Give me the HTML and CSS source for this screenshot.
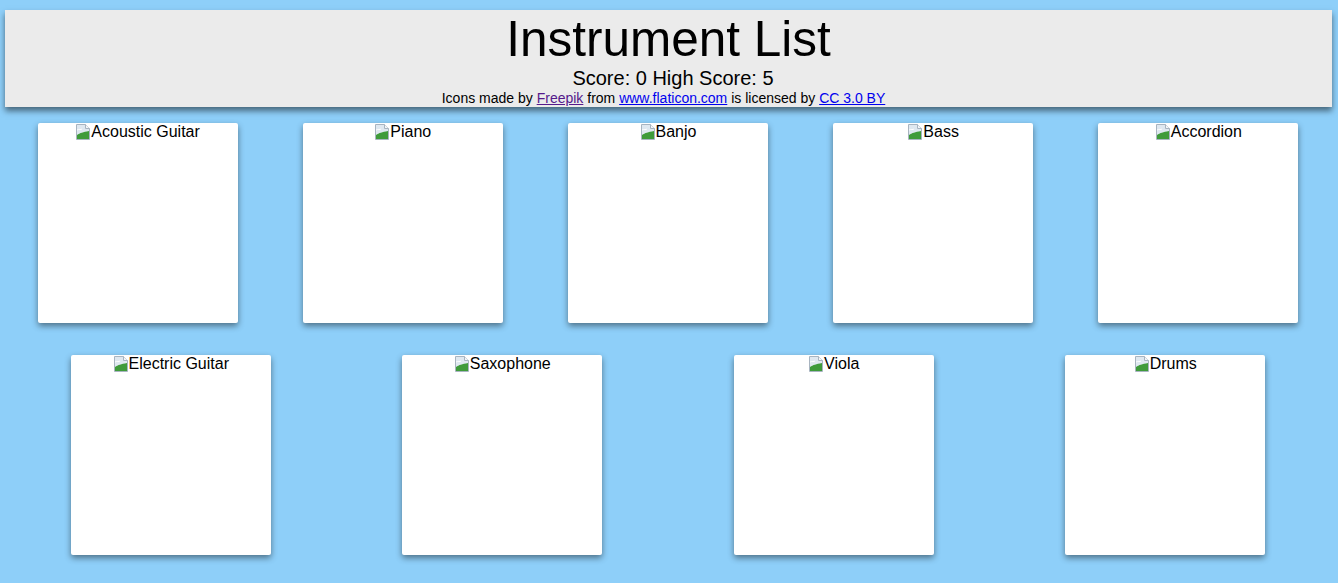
FILE: index.html
```html
<!DOCTYPE html>
<html>
<head>
<meta charset="utf-8">
<title>Instrument List</title>
<link rel="stylesheet" href="styles.css">
</head>
<body>
<header class="header">
  <h1 class="title">Instrument List</h1>
  <div class="score">Score: 0 High Score: 5</div>
  <div class="credits">Icons made by <a class="visited" href="#">Freepik</a> from <a href="#">www.flaticon.com</a> is licensed by <a href="#">CC 3.0 BY</a></div>
</header>
<main class="board">
  <div class="row">
    <div class="card"><span class="alt"><svg class="broken" viewBox="0 0 16 16"><path d="M1.5 0.5h9l4 4v11h-13z" fill="#dfe8f0" stroke="#a8b4c0"/><path d="M10.5 0.5v4h4" fill="#f4f6f8" stroke="#a8b4c0"/><path d="M2 15V11c3-2 6-3 12-4v8z" fill="#3f9b3a"/><path d="M2 6c2-1 4 0 5-1" stroke="#fff" fill="none"/></svg>Acoustic Guitar</span></div>
    <div class="card"><span class="alt"><svg class="broken" viewBox="0 0 16 16"><path d="M1.5 0.5h9l4 4v11h-13z" fill="#dfe8f0" stroke="#a8b4c0"/><path d="M10.5 0.5v4h4" fill="#f4f6f8" stroke="#a8b4c0"/><path d="M2 15V11c3-2 6-3 12-4v8z" fill="#3f9b3a"/><path d="M2 6c2-1 4 0 5-1" stroke="#fff" fill="none"/></svg>Piano</span></div>
    <div class="card"><span class="alt"><svg class="broken" viewBox="0 0 16 16"><path d="M1.5 0.5h9l4 4v11h-13z" fill="#dfe8f0" stroke="#a8b4c0"/><path d="M10.5 0.5v4h4" fill="#f4f6f8" stroke="#a8b4c0"/><path d="M2 15V11c3-2 6-3 12-4v8z" fill="#3f9b3a"/><path d="M2 6c2-1 4 0 5-1" stroke="#fff" fill="none"/></svg>Banjo</span></div>
    <div class="card"><span class="alt"><svg class="broken" viewBox="0 0 16 16"><path d="M1.5 0.5h9l4 4v11h-13z" fill="#dfe8f0" stroke="#a8b4c0"/><path d="M10.5 0.5v4h4" fill="#f4f6f8" stroke="#a8b4c0"/><path d="M2 15V11c3-2 6-3 12-4v8z" fill="#3f9b3a"/><path d="M2 6c2-1 4 0 5-1" stroke="#fff" fill="none"/></svg>Bass</span></div>
    <div class="card"><span class="alt"><svg class="broken" viewBox="0 0 16 16"><path d="M1.5 0.5h9l4 4v11h-13z" fill="#dfe8f0" stroke="#a8b4c0"/><path d="M10.5 0.5v4h4" fill="#f4f6f8" stroke="#a8b4c0"/><path d="M2 15V11c3-2 6-3 12-4v8z" fill="#3f9b3a"/><path d="M2 6c2-1 4 0 5-1" stroke="#fff" fill="none"/></svg>Accordion</span></div>
  </div>
  <div class="row">
    <div class="card"><span class="alt"><svg class="broken" viewBox="0 0 16 16"><path d="M1.5 0.5h9l4 4v11h-13z" fill="#dfe8f0" stroke="#a8b4c0"/><path d="M10.5 0.5v4h4" fill="#f4f6f8" stroke="#a8b4c0"/><path d="M2 15V11c3-2 6-3 12-4v8z" fill="#3f9b3a"/><path d="M2 6c2-1 4 0 5-1" stroke="#fff" fill="none"/></svg>Electric Guitar</span></div>
    <div class="card"><span class="alt"><svg class="broken" viewBox="0 0 16 16"><path d="M1.5 0.5h9l4 4v11h-13z" fill="#dfe8f0" stroke="#a8b4c0"/><path d="M10.5 0.5v4h4" fill="#f4f6f8" stroke="#a8b4c0"/><path d="M2 15V11c3-2 6-3 12-4v8z" fill="#3f9b3a"/><path d="M2 6c2-1 4 0 5-1" stroke="#fff" fill="none"/></svg>Saxophone</span></div>
    <div class="card"><span class="alt"><svg class="broken" viewBox="0 0 16 16"><path d="M1.5 0.5h9l4 4v11h-13z" fill="#dfe8f0" stroke="#a8b4c0"/><path d="M10.5 0.5v4h4" fill="#f4f6f8" stroke="#a8b4c0"/><path d="M2 15V11c3-2 6-3 12-4v8z" fill="#3f9b3a"/><path d="M2 6c2-1 4 0 5-1" stroke="#fff" fill="none"/></svg>Viola</span></div>
    <div class="card"><span class="alt"><svg class="broken" viewBox="0 0 16 16"><path d="M1.5 0.5h9l4 4v11h-13z" fill="#dfe8f0" stroke="#a8b4c0"/><path d="M10.5 0.5v4h4" fill="#f4f6f8" stroke="#a8b4c0"/><path d="M2 15V11c3-2 6-3 12-4v8z" fill="#3f9b3a"/><path d="M2 6c2-1 4 0 5-1" stroke="#fff" fill="none"/></svg>Drums</span></div>
  </div>
</main>
</body>
</html>
```
FILE: styles.css
```css
html, body {
  margin: 0;
  padding: 0;
  background: #8ecff9;
  font-family: "Liberation Sans", Arial, sans-serif;
  color: #000;
}
body {
  padding-bottom: 20px;
}
.header {
  margin: 10px 6px 0 5px;
  background: #ebebeb;
  text-align: center;
  padding: 0 0 1px;
  box-shadow: 0 4px 6px rgba(0, 0, 0, 0.5);
}
.title {
  margin: 0;
  font-size: 49.5px;
  font-weight: normal;
  line-height: 57px;
}
.score {
  font-size: 20px;
  line-height: 23px;
  padding-left: 9px;
}
.credits {
  font-size: 14px;
  line-height: 16px;
  padding-right: 10px;
}
.credits a {
  color: #0000ee;
}
.credits a.visited {
  color: #551a8b;
}
.board {
  margin: 16px 7px 0 5px;
  display: flex;
  flex-direction: column;
  gap: 32px;
}
.row {
  display: flex;
  justify-content: space-around;
}
.card {
  width: 200px;
  height: 200px;
  background: #fff;
  border-radius: 2px;
  box-shadow: 0 3px 6px rgba(0, 0, 0, 0.45);
  text-align: center;
  font-size: 16px;
  line-height: 18px;
}
.alt {
  display: inline-flex;
  align-items: flex-start;
}
.broken {
  width: 16px;
  height: 16px;
  margin-top: 1px;
}
```
